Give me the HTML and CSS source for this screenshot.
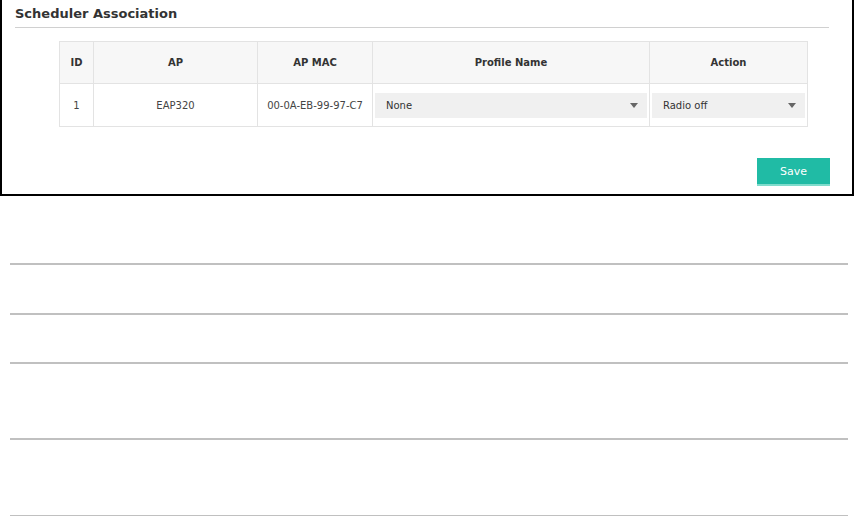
FILE: index.html
```html
<!DOCTYPE html>
<html lang="en">
<head>
    <meta charset="UTF-8">
    <title>Scheduler Association</title>
    <link rel="stylesheet" href="styles.css">
</head>
<body>
    <div class="panel">
        <h2 class="panel-title">Scheduler Association</h2>
        <table class="assoc-table">
            <thead>
                <tr>
                    <th class="col-id">ID</th>
                    <th class="col-ap">AP</th>
                    <th class="col-mac">AP MAC</th>
                    <th class="col-profile">Profile Name</th>
                    <th class="col-action">Action</th>
                </tr>
            </thead>
            <tbody>
                <tr>
                    <td>1</td>
                    <td>EAP320</td>
                    <td>00-0A-EB-99-97-C7</td>
                    <td class="select-cell">
                        <div class="select"><span>None</span><i class="caret"></i></div>
                    </td>
                    <td class="select-cell">
                        <div class="select"><span>Radio off</span><i class="caret"></i></div>
                    </td>
                </tr>
            </tbody>
        </table>
        <div class="actions">
            <button type="button" class="btn-save">Save</button>
        </div>
    </div>

    <div class="rule-list">
        <div class="rule first"></div>
        <div class="rule second"></div>
        <div class="rule"></div>
        <div class="rule tall"></div>
        <div class="rule tall last"></div>
    </div>
</body>
</html>
```

FILE: styles.css
```css
body {
    margin: 0;
    background: #fff;
    font-family: "DejaVu Sans", Verdana, sans-serif;
    color: #444;
}
.panel {
    height: 194px;
    width: 814px;
    border: 2px solid #000;
    border-top: none;
    padding: 0 23px 0 13px;
    display: flex;
    flex-direction: column;
}
.panel-title {
    margin: 0;
    height: 28px;
    padding-top: 6px;
    box-sizing: border-box;
    font-size: 13px;
    font-weight: bold;
    color: #333;
    border-bottom: 1px solid #d0d0d0;
}
.assoc-table {
    margin: 13px 22px 0 44px;
    border-collapse: collapse;
    width: 748px;
    table-layout: fixed;
    font-size: 10px;
}
.assoc-table th,
.assoc-table td {
    border: 1px solid #e3e3e3;
    text-align: center;
    padding: 0;
}
.assoc-table th {
    height: 41px;
    background: #f7f7f7;
    font-weight: bold;
    color: #333;
}
.assoc-table td {
    height: 42px;
}
.col-id { width: 33px; }
.col-ap { width: 163px; }
.col-mac { width: 114px; }
.col-profile { width: 276px; }
.col-action { width: 157px; }
.select-cell {
    padding: 0 2px !important;
}
.select {
    display: flex;
    align-items: center;
    justify-content: space-between;
    height: 25px;
    background: #f0f0f0;
    padding: 0 9px 0 11px;
    text-align: left;
    color: #333;
}
.caret {
    width: 0;
    height: 0;
    border-left: 4px solid transparent;
    border-right: 4px solid transparent;
    border-top: 5px solid #666;
}
.actions {
    display: flex;
    justify-content: flex-end;
    margin-top: auto;
    padding-bottom: 8px;
    margin-right: -1px;
}
.btn-save {
    width: 73px;
    height: 28px;
    border: none;
    border-bottom: 2px solid #7fdccc;
    background: #20bba5;
    color: #fff;
    font-family: "DejaVu Sans", Verdana, sans-serif;
    font-size: 11px;
    padding: 0;
    cursor: pointer;
}
.rule-list {
    margin: 0 6px 0 10px;
}
.rule {
    height: 47px;
    border-bottom: 2px solid #c0c0c0;
}
.rule.first {
    height: 67px;
}
.rule.second {
    height: 48px;
}
.rule.tall {
    height: 74px;
}
.rule.last {
    height: 75px;
}
```
